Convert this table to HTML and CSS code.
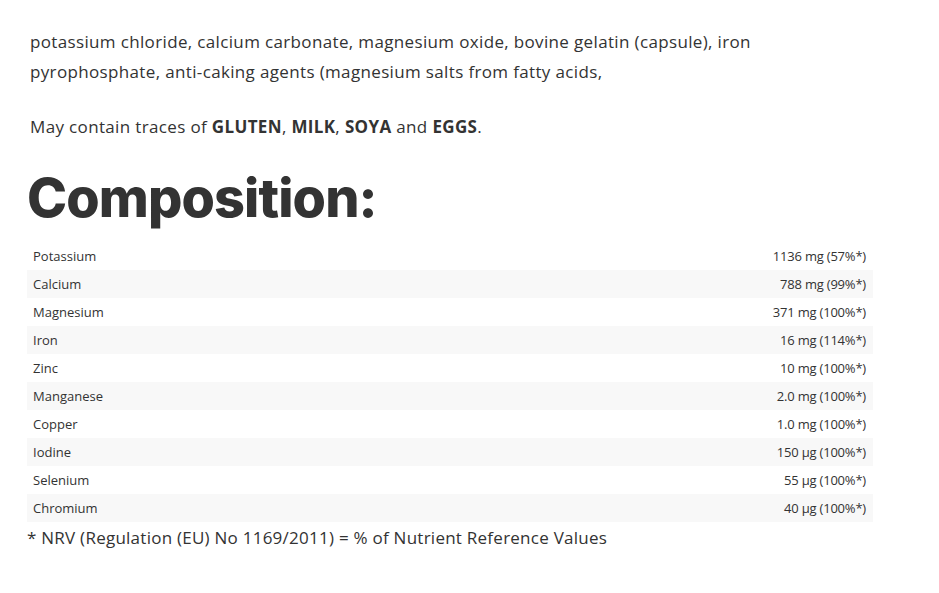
FILE: index.html
```html
<!DOCTYPE html>
<html>
<head>
<meta charset="utf-8">
<link rel="stylesheet" href="styles.css">
</head>
<body>
<div class="content">
  <p class="text">potassium chloride, calcium carbonate, magnesium oxide, bovine gelatin (capsule), iron pyrophosphate, anti-caking agents (magnesium salts from fatty acids,</p>
  <p class="text">May contain traces of <b>GLUTEN</b>, <b>MILK</b>, <b>SOYA</b> and <b>EGGS</b>.</p>
  <h2 class="heading">Composition:</h2>
  <table class="comp">
    <tr><td>Potassium</td><td class="val">1136 mg (57%*)</td></tr>
    <tr><td>Calcium</td><td class="val">788 mg (99%*)</td></tr>
    <tr><td>Magnesium</td><td class="val">371 mg (100%*)</td></tr>
    <tr><td>Iron</td><td class="val">16 mg (114%*)</td></tr>
    <tr><td>Zinc</td><td class="val">10 mg (100%*)</td></tr>
    <tr><td>Manganese</td><td class="val">2.0 mg (100%*)</td></tr>
    <tr><td>Copper</td><td class="val">1.0 mg (100%*)</td></tr>
    <tr><td>Iodine</td><td class="val">150 µg (100%*)</td></tr>
    <tr><td>Selenium</td><td class="val">55 µg (100%*)</td></tr>
    <tr><td>Chromium</td><td class="val">40 µg (100%*)</td></tr>
  </table>
  <p class="note">* NRV (Regulation (EU) No 1169/2011) = % of Nutrient Reference Values</p>
</div>
</body>
</html>
```
FILE: styles.css
```css
html, body {
  margin: 0;
  padding: 0;
  background: #fff;
}
body {
  font-family: "Open Sans", "Lato", sans-serif;
  color: #333;
}
.content {
  padding: 27px 0 0 27px;
  width: 846px;
}
.text {
  margin: 0 0 25px 3px;
  font-size: 17px;
  line-height: 30px;
  letter-spacing: 0.35px;
  width: 760px;
}
.text b {
  font-weight: 700;
}
.heading {
  margin: 0;
  font-family: "Inter", sans-serif;
  font-weight: 800;
  font-size: 54px;
  line-height: 62px;
  letter-spacing: -0.9px;
  color: #333;
}
.comp {
  width: 846px;
  border-collapse: collapse;
  margin-top: 13px;
  font-size: 13px;
}
.comp tr {
  height: 28px;
}
.comp tr:nth-child(even) {
  background: #f8f8f8;
}
.comp td {
  padding: 0 6px;
  vertical-align: middle;
}
.comp td.val {
  text-align: right;
  padding-right: 7px;
  letter-spacing: -0.2px;
}
.note {
  margin: 4px 0 0 0;
  font-size: 17px;
  line-height: 24px;
  letter-spacing: 0.25px;
}
```
